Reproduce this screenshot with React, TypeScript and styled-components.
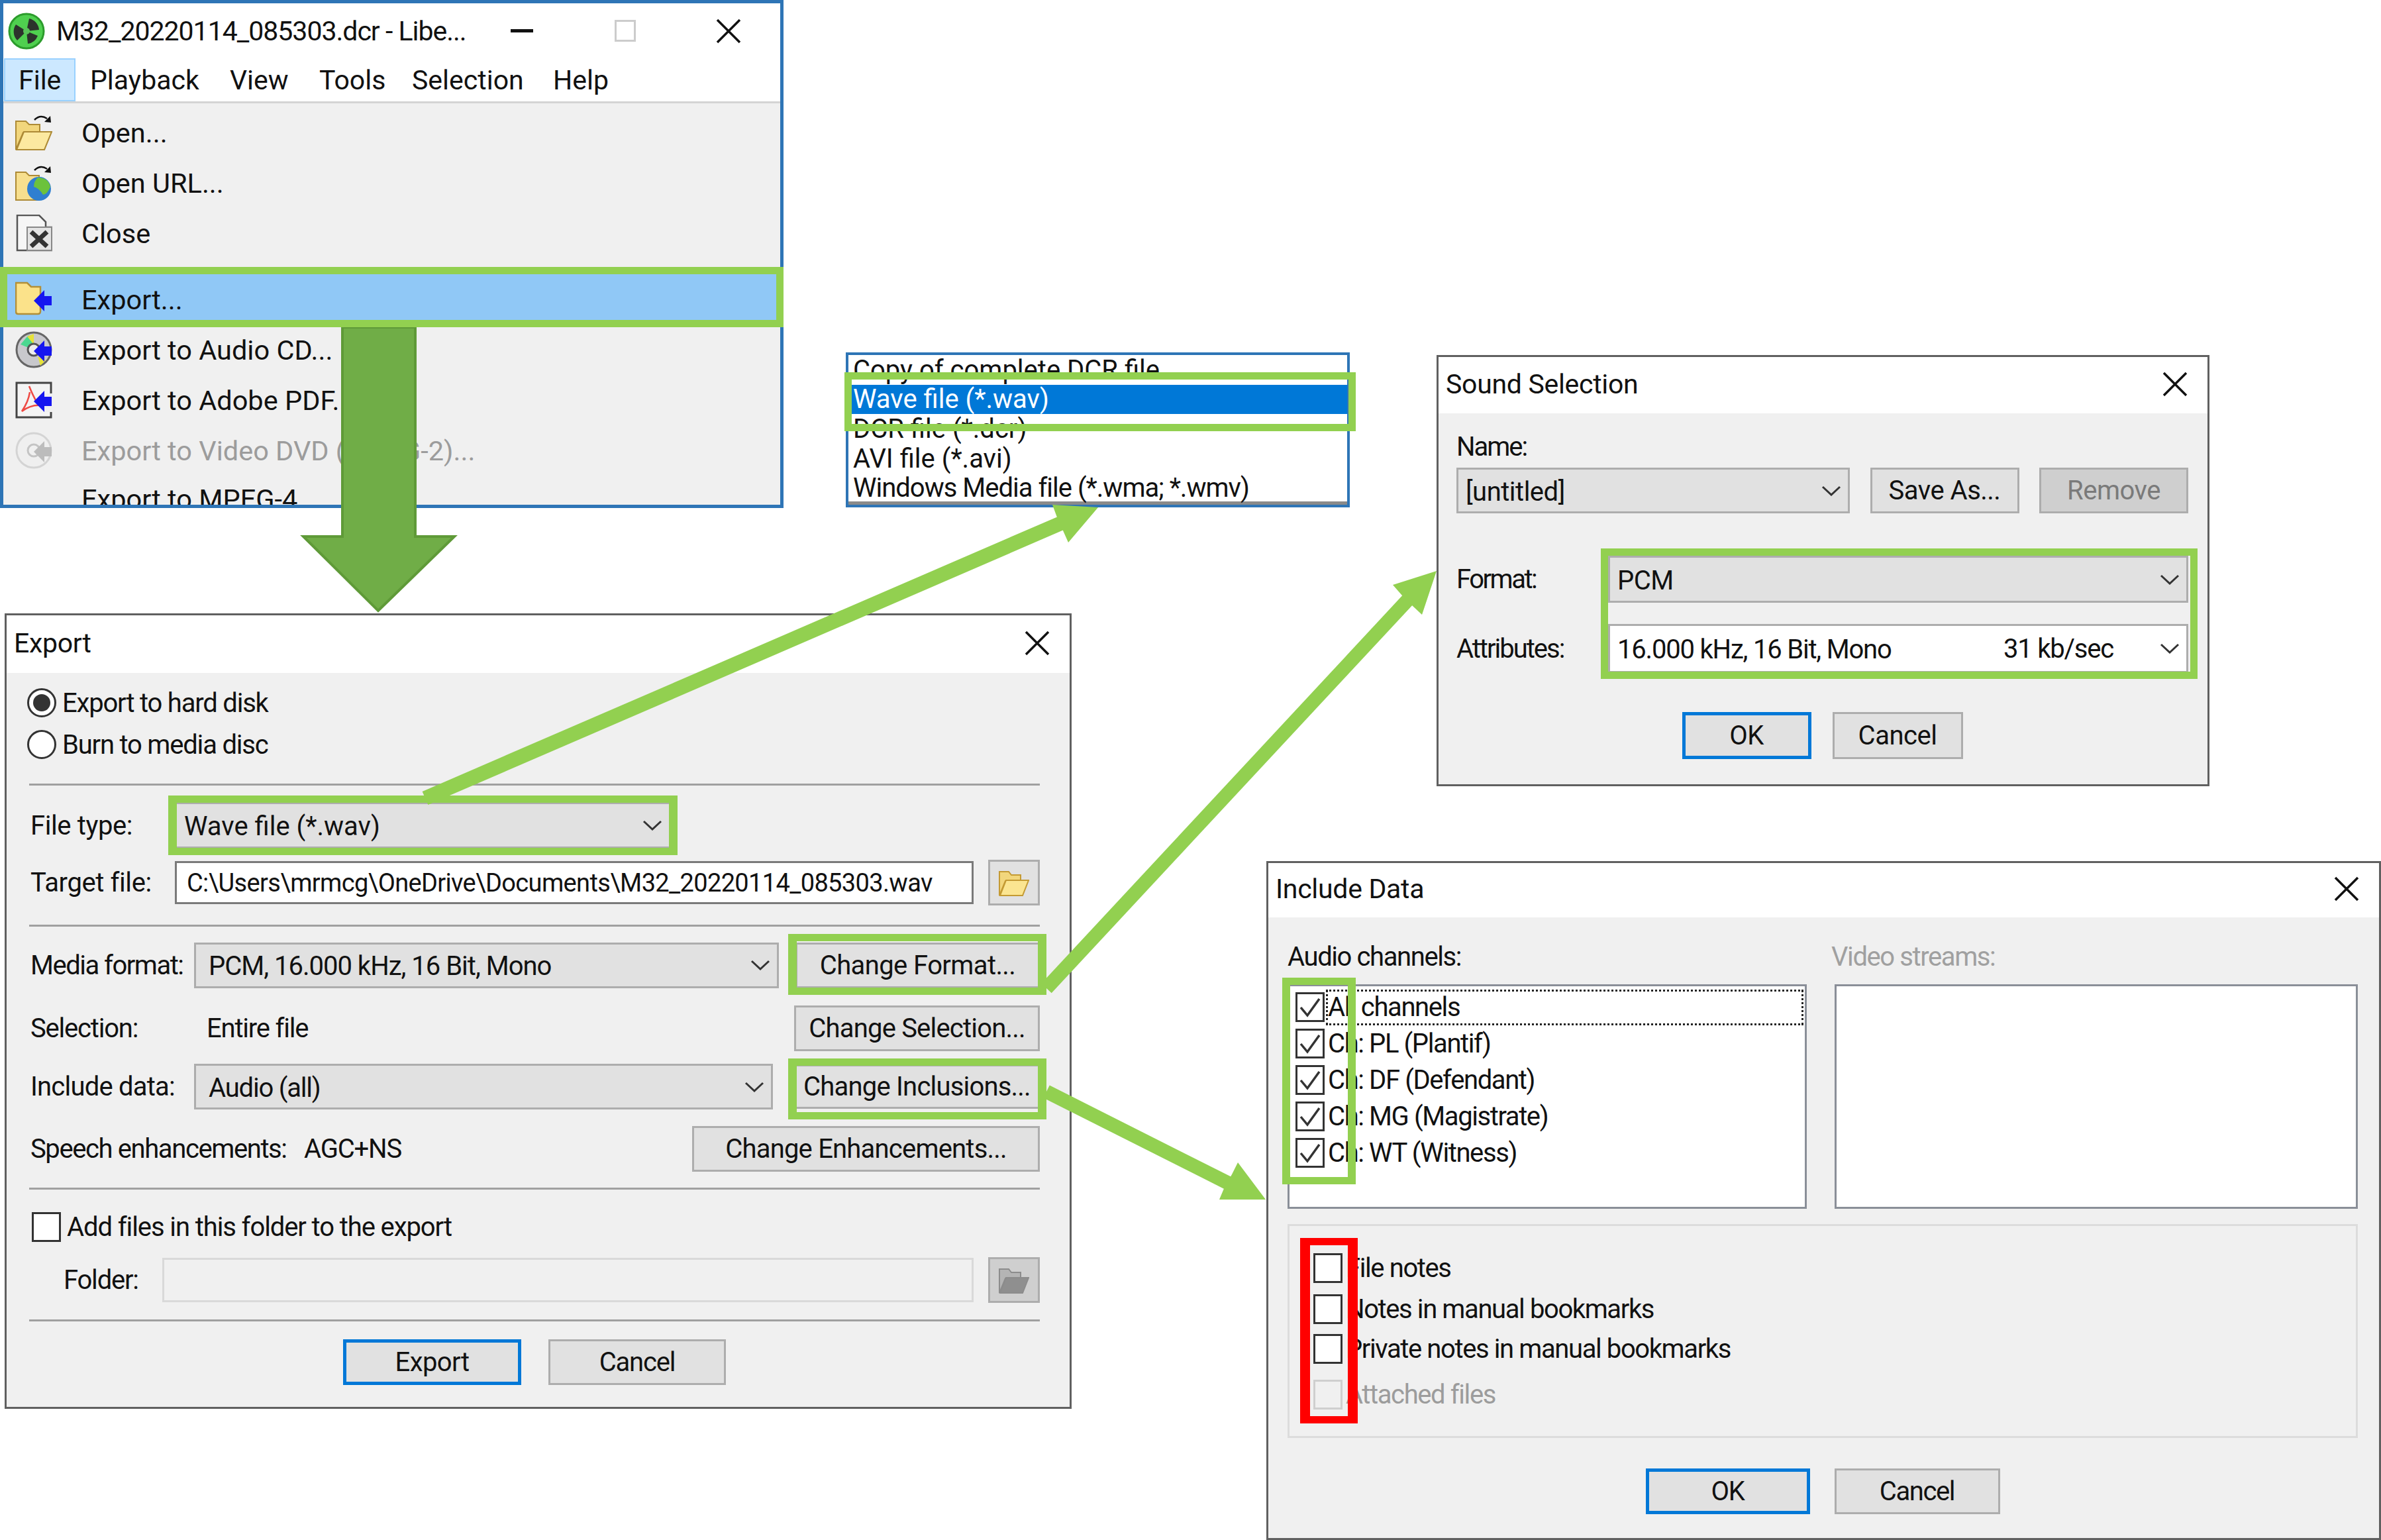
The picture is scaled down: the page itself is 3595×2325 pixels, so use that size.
import styled, { createGlobalStyle } from 'styled-components';

const GlobalStyle = createGlobalStyle`
  html, body {
    margin: 0;
    padding: 0;
    background: #fff;
  }
  * {
    box-sizing: border-box;
  }
  svg {
    flex: none;
  }
`;

const GREEN = '#92d050';
const BLUE = '#0078d7';

const Canvas = styled.div`
  position: relative;
  width: 3595px;
  height: 2325px;
  overflow: hidden;
  background: #fff;
  color: #111;
  font-family: Roboto, 'Liberation Sans', sans-serif;
  font-size: 40px;
`;

const Window = styled.div<{ $x: number; $y: number; $w: number; $h: number; $border?: string; $bw?: number }>`
  position: absolute;
  left: ${(p) => p.$x}px;
  top: ${(p) => p.$y}px;
  width: ${(p) => p.$w}px;
  height: ${(p) => p.$h}px;
  border: ${(p) => p.$bw ?? 3}px solid ${(p) => p.$border ?? '#606060'};
  background: #f0f0f0;
  overflow: hidden;
`;

const Marker = styled.div<{ $x: number; $y: number; $w: number; $h: number; $color?: string; $side?: number }>`
  position: absolute;
  left: ${(p) => p.$x}px;
  top: ${(p) => p.$y}px;
  width: ${(p) => p.$w}px;
  height: ${(p) => p.$h}px;
  border: solid ${(p) => p.$color ?? GREEN};
  border-width: 11px ${(p) => p.$side ?? 11}px;
`;

const ArrowLayer = styled.svg`
  position: absolute;
  left: 0;
  top: 0;
  pointer-events: none;
`;

/* main window */
const AppTitle = styled.div`
  display: flex;
  align-items: center;
  height: 83px;
  padding-left: 7px;
  background: #fff;
`;

const AppTitleText = styled.span`
  margin-left: 17px;
  font-size: 41px;
  letter-spacing: -1px;
  white-space: nowrap;
`;

const CaptionButtons = styled.div`
  display: flex;
  flex: none;
  margin-left: auto;
`;

const CaptionButton = styled.div`
  display: flex;
  align-items: center;
  justify-content: center;
  width: 156px;
  height: 70px;
`;

const MinGlyph = styled.div`
  width: 34px;
  height: 5px;
  background: #111;
`;

const MaxGlyph = styled.div`
  width: 32px;
  height: 33px;
  border: 3px solid #ccc;
`;

const MenuBar = styled.div`
  display: flex;
  height: 68px;
  padding-left: 1px;
  background: #fff;
  border-bottom: 3px solid #d4d4d4;
`;

const MenuEntry = styled.div<{ $active?: boolean; $w: number }>`
  display: flex;
  align-items: center;
  width: ${(p) => p.$w}px;
  padding-left: 20px;
  font-size: 41px;
  background: ${(p) => (p.$active ? '#cce8ff' : 'transparent')};
  border: 2px solid ${(p) => (p.$active ? '#99d1ff' : 'transparent')};
  white-space: nowrap;
`;

const MenuList = styled.div`
  padding-top: 6px;
  background: #f0f0f0;
`;

const MenuRow = styled.div<{ $hover?: boolean; $off?: boolean; $top?: number }>`
  display: flex;
  align-items: center;
  gap: 44px;
  height: 76px;
  margin-top: ${(p) => p.$top ?? 0}px;
  padding-left: 18px;
  font-size: 41.5px;
  color: ${(p) => (p.$off ? '#9c9c9c' : '#111')};
  background: ${(p) => (p.$hover ? '#90c8f6' : 'transparent')};
  white-space: nowrap;
`;

/* dialogs */
const DialogTitle = styled.div<{ $h: number }>`
  display: flex;
  align-items: center;
  justify-content: space-between;
  height: ${(p) => p.$h}px;
  padding: 0 30px 4px 11px;
  background: #fff;
  font-size: 41px;
  letter-spacing: -0.3px;
`;

const DialogBody = styled.div<{ $left: number; $right: number; $ls: number }>`
  display: flex;
  flex-direction: column;
  padding: 0 ${(p) => p.$right}px 0 ${(p) => p.$left}px;
  letter-spacing: ${(p) => p.$ls}px;
`;

const Row = styled.div<{ $top: number; $h: number }>`
  display: flex;
  align-items: center;
  flex: none;
  height: ${(p) => p.$h}px;
  margin-top: ${(p) => p.$top}px;
`;

const Rule = styled.div<{ $top: number }>`
  flex: none;
  height: 3px;
  margin-top: ${(p) => p.$top}px;
  background: #a0a0a0;
`;

const Label = styled.span<{ $w?: number; $indent?: number; $muted?: boolean; $ls?: number }>`
  flex: none;
  width: ${(p) => (p.$w ? `${p.$w}px` : 'auto')};
  padding-left: ${(p) => p.$indent ?? 2}px;
  color: ${(p) => (p.$muted ? '#a0a0a0' : '#111')};
  letter-spacing: ${(p) => (p.$ls !== undefined ? `${p.$ls}px` : 'inherit')};
  white-space: nowrap;
`;

const Select = styled.div<{ $w: number; $h?: number; $white?: boolean; $pad?: number; $ls?: number }>`
  display: flex;
  align-items: center;
  flex: none;
  width: ${(p) => p.$w}px;
  height: ${(p) => p.$h ?? 69}px;
  padding: 0 10px 0 ${(p) => p.$pad ?? 10}px;
  background: ${(p) => (p.$white ? '#fff' : '#e1e1e1')};
  border: 3px solid #adadad;
  letter-spacing: ${(p) => (p.$ls !== undefined ? `${p.$ls}px` : 'inherit')};
  white-space: nowrap;
`;

const SelectText = styled.span`
  flex: 1;
  padding: 3px 0 0 1px;
`;

const SelectSide = styled.span`
  margin-right: 70px;
`;

const TextField = styled.div<{ $w: number; $off?: boolean }>`
  display: flex;
  align-items: center;
  flex: none;
  width: ${(p) => p.$w}px;
  height: ${(p) => (p.$off ? 67 : 65)}px;
  padding-left: 15px;
  background: ${(p) => (p.$off ? '#f0f0f0' : '#fff')};
  border: 3px solid ${(p) => (p.$off ? '#d9d9d9' : '#7a7a7a')};
  font-size: 38px;
  letter-spacing: -0.65px;
  white-space: nowrap;
`;

const Button = styled.div<{ $w: number; $h?: number; $primary?: boolean; $off?: boolean; $push?: boolean; $ls?: number }>`
  display: flex;
  align-items: center;
  justify-content: center;
  flex: none;
  width: ${(p) => p.$w}px;
  height: ${(p) => p.$h ?? 69}px;
  margin-left: ${(p) => (p.$push ? 'auto' : '0')};
  background: ${(p) => (p.$off ? '#cfcfcf' : '#e1e1e1')};
  color: ${(p) => (p.$off ? '#7a7a7a' : '#111')};
  border: ${(p) => (p.$primary ? `5px solid ${BLUE}` : '3px solid #adadad')};
  letter-spacing: ${(p) => (p.$ls !== undefined ? `${p.$ls}px` : 'inherit')};
  white-space: nowrap;
`;

const ButtonBar = styled.div<{ $top: number; $gap: number }>`
  display: flex;
  justify-content: center;
  gap: ${(p) => p.$gap}px;
  margin-top: ${(p) => p.$top}px;
`;

const Radio = styled.div<{ $on?: boolean }>`
  display: flex;
  align-items: center;
  justify-content: center;
  flex: none;
  width: 44px;
  height: 44px;
  margin: 0 9px 0 -3px;
  border-radius: 50%;
  border: 3px solid #333;
  background: #fff;

  &::after {
    content: '';
    display: ${(p) => (p.$on ? 'block' : 'none')};
    width: 26px;
    height: 26px;
    border-radius: 50%;
    background: #333;
  }
`;

const CheckBox = styled.div<{ $off?: boolean }>`
  display: flex;
  align-items: center;
  justify-content: center;
  flex: none;
  width: 44px;
  height: 45px;
  background: ${(p) => (p.$off ? '#f0f0f0' : '#fff')};
  border: 3px solid ${(p) => (p.$off ? '#cfcfcf' : '#333')};
`;

const AddFilesCheck = styled(CheckBox)`
  margin-left: 4px;
`;

/* format list */
const FormatRow = styled.div<{ $selected?: boolean; $tight?: boolean }>`
  display: flex;
  align-items: center;
  height: 44.6px;
  padding-left: 7px;
  background: ${(p) => (p.$selected ? BLUE : 'transparent')};
  color: ${(p) => (p.$selected ? '#fff' : '#111')};
  font-size: 40px;
  letter-spacing: ${(p) => (p.$tight ? -1 : 0)}px;
  white-space: nowrap;
`;

const FormatList = styled.div`
  height: 100%;
  background: #fff;
  box-shadow: inset 0 -5px 0 #8a8a8a;
`;

/* include data */
const Columns = styled.div`
  display: flex;
  gap: 42px;
  margin-top: 22px;
`;

const ColumnLabels = styled.div`
  display: flex;
  align-items: center;
  height: 40px;
  margin-top: 39px;
`;

const ListBox = styled.div<{ $w: number }>`
  flex: none;
  width: ${(p) => p.$w}px;
  height: 339px;
  padding: 4px 2px 0 9px;
  background: #fff;
  border: 3px solid #8a8f98;
`;

const ChannelRow = styled.div`
  display: flex;
  align-items: center;
  gap: 2px;
  height: 55px;
`;

const ChannelText = styled.div<{ $focus?: boolean }>`
  display: flex;
  align-items: center;
  flex: 1;
  height: 54px;
  border: 3px dotted ${(p) => (p.$focus ? '#222' : 'transparent')};
  white-space: nowrap;
`;

const GroupBox = styled.div`
  height: 323px;
  margin-top: 23px;
  padding: 33px 0 0 36px;
  border: 3px solid #dcdcdc;
`;

const OptionRow = styled.div<{ $top?: number; $muted?: boolean }>`
  display: flex;
  align-items: center;
  gap: 5px;
  height: 60px;
  margin-top: ${(p) => p.$top ?? 0}px;
  color: ${(p) => (p.$muted ? '#9c9c9c' : '#111')};
  white-space: nowrap;
`;

/* small drawings */
const Chevron = () => (
  <svg width="30" height="16" viewBox="0 0 30 16">
    <polyline points="2,2 15,14 28,2" fill="none" stroke="#333" strokeWidth="3" />
  </svg>
);

const CloseX = () => (
  <svg width="38" height="38" viewBox="0 0 38 38">
    <path d="M2 2 L36 36 M36 2 L2 36" stroke="#111" strokeWidth="3.5" />
  </svg>
);

const Tick = () => (
  <svg width="34" height="32" viewBox="0 0 34 32">
    <polyline points="3,16 13,28 31,3" fill="none" stroke="#333" strokeWidth="3.5" />
  </svg>
);

const AppIcon = () => (
  <svg width="56" height="56" viewBox="0 0 56 56">
    <circle cx="28" cy="28" r="26" fill="#4fd04f" stroke="#2c9c2c" strokeWidth="3" />
    <path d="M28 28 L12 18 A19 19 0 0 0 14 42 Z M28 28 L32 9 A19 19 0 0 1 47 26 Z M28 28 L45 35 A19 19 0 0 1 30 47 Z" fill="#2c322c" />
    <circle cx="28" cy="28" r="5" fill="#58c458" />
  </svg>
);

const ArrowHook = () => (
  <>
    <path d="M29 9 Q38 0 48 7" fill="none" stroke="#111" strokeWidth="2.5" />
    <path d="M44 12 L54 13 L53 3 Z" fill="#111" />
  </>
);

const OpenIcon = () => (
  <svg width="56" height="56" viewBox="0 0 56 56">
    <path d="M1 11 H16 L21 16 H37 V28 H12 L1 54 Z" fill="#f2d67c" stroke="#ad8a35" strokeWidth="2" />
    <path d="M2 54 L13 27 H55 L44 54 Z" fill="#fce9a0" stroke="#ad8a35" strokeWidth="2" />
    <ArrowHook />
  </svg>
);

const OpenUrlIcon = () => (
  <svg width="56" height="56" viewBox="0 0 56 56">
    <path d="M1 12 H16 L21 17 H36 V54 H1 Z" fill="#f7df8e" stroke="#ad8a35" strokeWidth="2" />
    <circle cx="36" cy="37" r="18" fill="#2f7fd0" />
    <path d="M34 20 Q50 20 53 34 Q48 46 42 46 Q36 36 28 34 Q28 26 34 20 Z" fill="#6cc23c" />
    <ArrowHook />
  </svg>
);

const CloseDocIcon = () => (
  <svg width="56" height="56" viewBox="0 0 56 56">
    <path d="M3 1 H36 L46 11 V19 H55 V54 H3 Z" fill="#f6f6f6" stroke="#555" strokeWidth="2.5" />
    <path d="M18 19 H55 V54 H18 Z" fill="#e4e4e4" stroke="#888" strokeWidth="2" />
    <path d="M24 26 L48 48 M48 26 L24 48" stroke="#333" strokeWidth="7" />
  </svg>
);

const ExportArrow = ({ color = '#1616f0' }: { color?: string }) => (
  <path d="M28 30 L44 14 V23 H55 V37 H44 V46 Z" fill={color} />
);

const ExportIcon = () => (
  <svg width="56" height="56" viewBox="0 0 56 56">
    <path d="M1 3 H18 L24 9 H38 V46 Q38 50 34 50 H4 Q1 50 1 46 Z" fill="#fbe28a" stroke="#b28f38" strokeWidth="2.5" />
    <ExportArrow />
  </svg>
);

const CdIcon = ({ off }: { off?: boolean }) => (
  <svg width="56" height="56" viewBox="0 0 56 56">
    <circle cx="28" cy="28" r="26" fill={off ? '#efefef' : '#c8c8cc'} stroke={off ? '#d4d4d4' : '#666'} strokeWidth="3" />
    {!off && <path d="M8 20 L20 6 L27 19 L20 25 Z" fill="#4bd890" />}
    {!off && <path d="M18 8 L28 4 L28 20 Z" fill="#e6e23a" />}
    {!off && <path d="M34 38 L46 44 L38 52 Z" fill="#e6e23a" />}
    <circle cx="28" cy="28" r="9" fill={off ? '#f0f0f0' : '#ededed'} stroke={off ? '#c4c4c4' : '#555'} strokeWidth="3" />
    <ExportArrow color={off ? '#bcbcbc' : '#1616f0'} />
  </svg>
);

const PdfIcon = () => (
  <svg width="56" height="56" viewBox="0 0 56 56">
    <rect x="2" y="2" width="52" height="52" fill="#f4f4f4" stroke="#444" strokeWidth="3" />
    <path d="M21 7 Q27 22 33 32 L41 36 Q24 34 10 45 Q20 30 22 16" fill="none" stroke="#ee4a44" strokeWidth="2.5" />
    <rect x="42" y="18" width="14" height="28" fill="#f0f0f0" />
    <ExportArrow />
  </svg>
);

const FolderButton = ({ off }: { off?: boolean }) => (
  <svg width="46" height="42" viewBox="0 0 46 42">
    <path d="M1 4 H15 L19 9 H33 V18 H10 L1 40 Z" fill={off ? '#b4b4b4' : '#f2d67c'} stroke={off ? '#8c8c8c' : '#c49a33'} strokeWidth="2" />
    <path d="M2 40 L11 17 H45 L36 40 Z" fill={off ? '#8f8f8f' : '#fbe591'} stroke={off ? '#8c8c8c' : '#c49a33'} strokeWidth="2" />
  </svg>
);

const Arrows = () => (
  <ArrowLayer width="3595" height="2325" viewBox="0 0 3595 2325">
    <path d="M517 494 H627 V810 H686 L571 922 L458 810 H517 Z" fill="#70ad47" stroke="#5f9a38" strokeWidth="4" />
    <line x1="642" y1="1205" x2="1604" y2="789" stroke={GREEN} strokeWidth="22" />
    <path d="M1658 766 L1613 819 L1605 801 L1596 781 L1589 762 Z" fill={GREEN} />
    <line x1="1580" y1="1492" x2="2129" y2="902" stroke={GREEN} strokeWidth="21" />
    <path d="M2169 862 L2147 928 L2132 914 L2117 899 L2103 883 Z" fill={GREEN} />
    <line x1="1580" y1="1648" x2="1858" y2="1788" stroke={GREEN} strokeWidth="21" />
    <path d="M1911 1811 L1841 1811 L1849 1792 L1860 1773 L1869 1755 Z" fill={GREEN} />
  </ArrowLayer>
);

const MainWindow = () => (
  <Window $x={0} $y={0} $w={1183} $h={767} $border="#2e75b6" $bw={5}>
    <AppTitle>
      <AppIcon />
      <AppTitleText>M32_20220114_085303.dcr - Libe...</AppTitleText>
      <CaptionButtons>
        <CaptionButton>
          <MinGlyph />
        </CaptionButton>
        <CaptionButton>
          <MaxGlyph />
        </CaptionButton>
        <CaptionButton>
          <CloseX />
        </CaptionButton>
      </CaptionButtons>
    </AppTitle>
    <MenuBar>
      <MenuEntry $active $w={108}>File</MenuEntry>
      <MenuEntry $w={211}>Playback</MenuEntry>
      <MenuEntry $w={135}>View</MenuEntry>
      <MenuEntry $w={140}>Tools</MenuEntry>
      <MenuEntry $w={213}>Selection</MenuEntry>
      <MenuEntry $w={120}>Help</MenuEntry>
    </MenuBar>
    <MenuList>
      <MenuRow><OpenIcon />Open...</MenuRow>
      <MenuRow><OpenUrlIcon />Open URL...</MenuRow>
      <MenuRow><CloseDocIcon />Close</MenuRow>
      <MenuRow $hover $top={24}><ExportIcon />Export...</MenuRow>
      <MenuRow><CdIcon />Export to Audio CD...</MenuRow>
      <MenuRow><PdfIcon />Export to Adobe PDF...</MenuRow>
      <MenuRow $off><CdIcon off />Export to Video DVD (MPEG-2)...</MenuRow>
      <MenuRow $top={-3}><svg width="56" height="56" />Export to MPEG-4...</MenuRow>
    </MenuList>
  </Window>
);

const FormatWindow = () => (
  <Window $x={1277} $y={532} $w={761} $h={234} $border="#2e75b6" $bw={4}>
    <FormatList>
      <FormatRow>Copy of complete DCR file</FormatRow>
      <FormatRow $selected>Wave file (*.wav)</FormatRow>
      <FormatRow>DCR file (*.dcr)</FormatRow>
      <FormatRow>AVI file (*.avi)</FormatRow>
      <FormatRow $tight>Windows Media file (*.wma; *.wmv)</FormatRow>
    </FormatList>
  </Window>
);

const ExportWindow = () => (
  <Window $x={7} $y={926} $w={1611} $h={1201}>
    <DialogTitle $h={87}>
      Export
      <CloseX />
    </DialogTitle>
    <DialogBody $left={34} $right={45} $ls={-1.2}>
      <Row $top={20} $h={50}>
        <Radio $on />
        Export to hard disk
      </Row>
      <Row $top={13} $h={50}>
        <Radio />
        Burn to media disc
      </Row>
      <Rule $top={34} />
      <Row $top={25} $h={70}>
        <Label $w={220} $ls={-0.4}>File type:</Label>
        <Select $w={749} $h={70} $ls={0}>
          <SelectText>Wave file (*.wav)</SelectText>
          <Chevron />
        </Select>
      </Row>
      <Row $top={17} $h={69}>
        <Label $w={220} $ls={-0.4}>Target file:</Label>
        <TextField $w={1206}>C:\Users\mrmcg\OneDrive\Documents\M32_20220114_085303.wav</TextField>
        <Button $w={78} $push>
          <FolderButton />
        </Button>
      </Row>
      <Rule $top={29} />
      <Row $top={22} $h={72}>
        <Label $w={249} $ls={-1.5}>Media format:</Label>
        <Select $w={883} $pad={18} $ls={-1}>
          <SelectText>PCM, 16.000 kHz, 16 Bit, Mono</SelectText>
          <Chevron />
        </Select>
        <Button $w={369} $push $ls={-0.6}>Change Format...</Button>
      </Row>
      <Row $top={25} $h={69}>
        <Label $w={268}>Selection:</Label>
        Entire file
        <Button $w={371} $push $ls={-0.8}>Change Selection...</Button>
      </Row>
      <Row $top={18} $h={71}>
        <Label $w={249} $ls={-0.8}>Include data:</Label>
        <Select $w={874} $pad={18}>
          <SelectText>Audio (all)</SelectText>
          <Chevron />
        </Select>
        <Button $w={371} $h={67} $push $ls={-0.8}>Change Inclusions...</Button>
      </Row>
      <Row $top={23} $h={71}>
        <Label $w={415} $ls={-1.4}>Speech enhancements:</Label>
        AGC+NS
        <Button $w={525} $push $ls={-0.8}>Change Enhancements...</Button>
      </Row>
      <Rule $top={23} />
      <Row $top={34} $h={45}>
        <AddFilesCheck />
        <Label $indent={9} $ls={-1.1}>Add files in this folder to the export</Label>
      </Row>
      <Row $top={23} $h={69}>
        <Label $w={201} $indent={52}>Folder:</Label>
        <TextField $w={1225} $off />
        <Button $w={78} $off $push>
          <FolderButton off />
        </Button>
      </Row>
      <Rule $top={25} />
      <ButtonBar $top={27} $gap={41}>
        <Button $w={269} $primary $ls={-0.6}>Export</Button>
        <Button $w={268}>Cancel</Button>
      </ButtonBar>
    </DialogBody>
  </Window>
);

const SoundWindow = () => (
  <Window $x={2169} $y={536} $w={1167} $h={651}>
    <DialogTitle $h={85}>
      Sound Selection
      <CloseX />
    </DialogTitle>
    <DialogBody $left={27} $right={29} $ls={-0.5}>
      <Row $top={30} $h={40}>
        <Label $indent={0} $ls={-2}>Name:</Label>
      </Row>
      <Row $top={12} $h={69}>
        <Select $w={594}>
          <SelectText>[untitled]</SelectText>
          <Chevron />
        </Select>
        <Button $w={225} $push>Save As...</Button>
        <Button $w={225} $off $push>Remove</Button>
      </Row>
      <Row $top={64} $h={71}>
        <Label $w={229} $indent={0} $ls={-2.5}>Format:</Label>
        <Select $w={876} $h={71}>
          <SelectText>PCM</SelectText>
          <Chevron />
        </Select>
      </Row>
      <Row $top={32} $h={74}>
        <Label $w={229} $indent={0} $ls={-2}>Attributes:</Label>
        <Select $w={876} $h={74} $white $ls={-1.2}>
          <SelectText>16.000 kHz, 16 Bit, Mono</SelectText>
          <SelectSide>31 kb/sec</SelectSide>
          <Chevron />
        </Select>
      </Row>
      <ButtonBar $top={59} $gap={32}>
        <Button $w={195} $h={71} $primary>OK</Button>
        <Button $w={197} $h={71}>Cancel</Button>
      </ButtonBar>
    </DialogBody>
  </Window>
);

const channels = ['All channels', 'Ch: PL (Plantif)', 'Ch: DF (Defendant)', 'Ch: MG (Magistrate)', 'Ch: WT (Witness)'];

const IncludeWindow = () => (
  <Window $x={1912} $y={1300} $w={1683} $h={1025}>
    <DialogTitle $h={82}>
      Include Data
      <CloseX />
    </DialogTitle>
    <DialogBody $left={29} $right={32} $ls={-1.4}>
      <ColumnLabels>
        <Label $w={821} $indent={0}>Audio channels:</Label>
        <Label $muted $indent={0}>Video streams:</Label>
      </ColumnLabels>
      <Columns>
        <ListBox $w={784}>
          {channels.map((name, i) => (
            <ChannelRow key={name}>
              <CheckBox>
                <Tick />
              </CheckBox>
              <ChannelText $focus={i === 0}>{name}</ChannelText>
            </ChannelRow>
          ))}
        </ListBox>
        <ListBox $w={790} />
      </Columns>
      <GroupBox>
        <OptionRow>
          <CheckBox />
          File notes
        </OptionRow>
        <OptionRow $top={2}>
          <CheckBox />
          Notes in manual bookmarks
        </OptionRow>
        <OptionRow>
          <CheckBox />
          Private notes in manual bookmarks
        </OptionRow>
        <OptionRow $top={9} $muted>
          <CheckBox $off />
          Attached files
        </OptionRow>
      </GroupBox>
      <ButtonBar $top={46} $gap={37}>
        <Button $w={248} $primary>OK</Button>
        <Button $w={250}>Cancel</Button>
      </ButtonBar>
    </DialogBody>
  </Window>
);

const App = () => {
  return (
    <Canvas>
      <GlobalStyle />
      <MainWindow />
      <FormatWindow />
      <ExportWindow />
      <SoundWindow />
      <IncludeWindow />
      <Arrows />
      <Marker $x={0} $y={403} $w={1183} $h={91} />
      <Marker $x={1275} $y={562} $w={772} $h={89} />
      <Marker $x={254} $y={1201} $w={769} $h={90} $side={13} />
      <Marker $x={1190} $y={1410} $w={390} $h={92} $side={13} />
      <Marker $x={1190} $y={1598} $w={390} $h={92} $side={13} />
      <Marker $x={2417} $y={828} $w={901} $h={197} />
      <Marker $x={1936} $y={1476} $w={111} $h={312} $side={12} />
      <Marker $x={1963} $y={1869} $w={87} $h={280} $color="#ff0000" $side={15} />
    </Canvas>
  );
};

export default App;
